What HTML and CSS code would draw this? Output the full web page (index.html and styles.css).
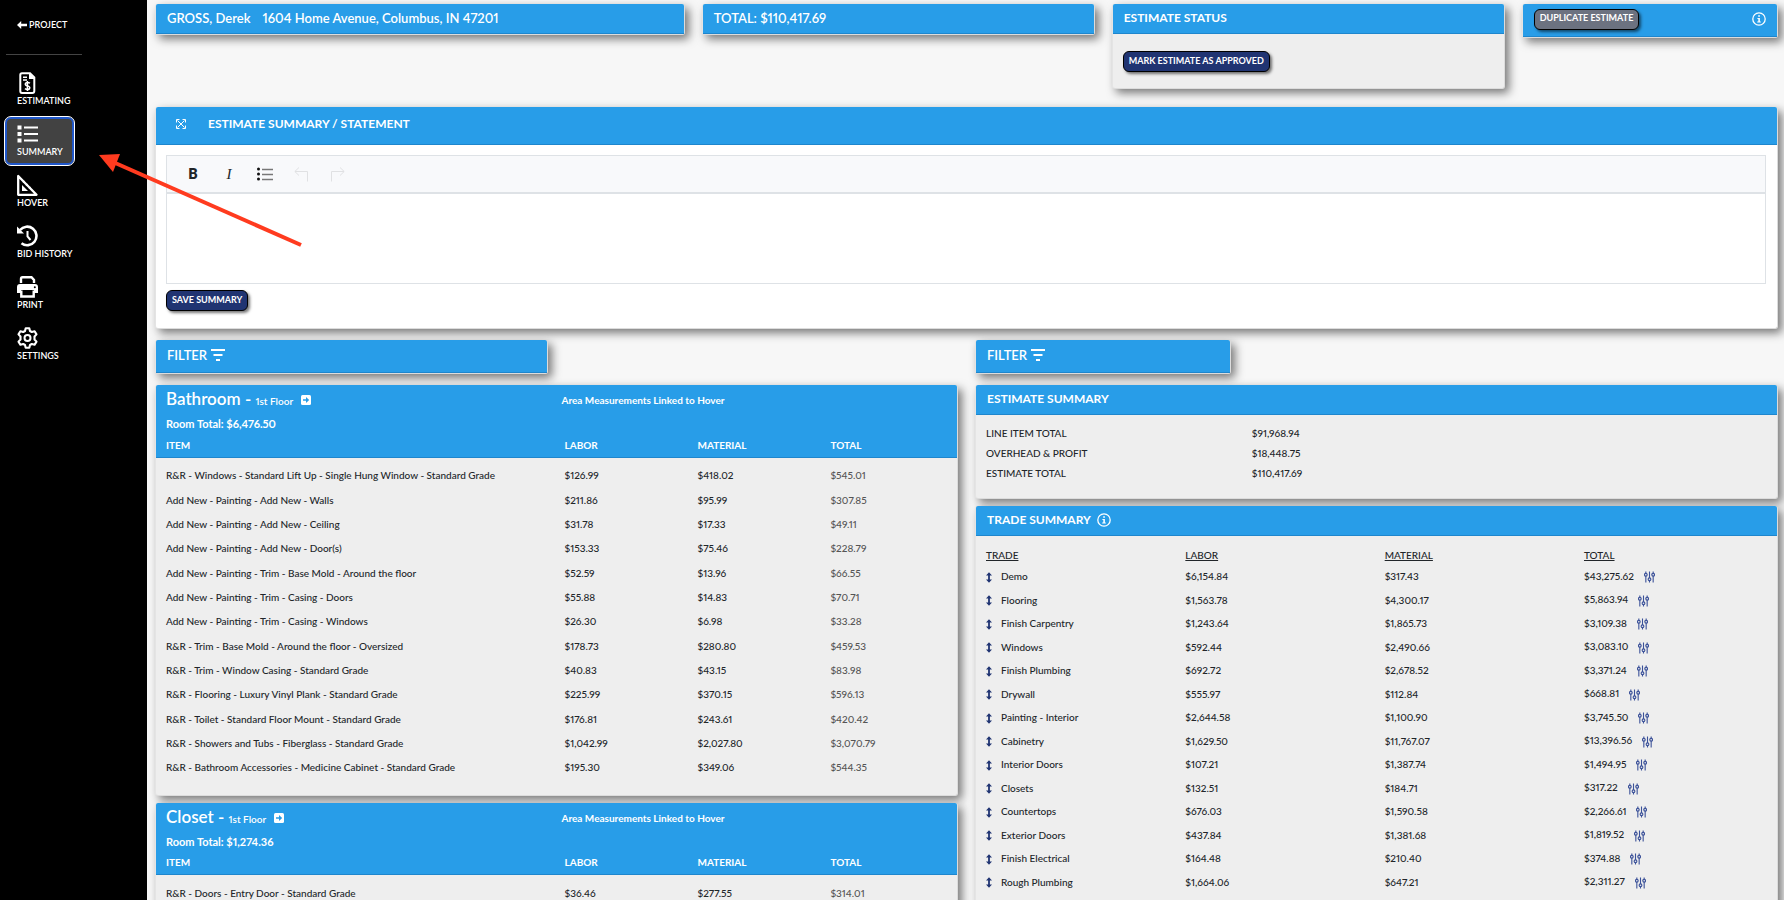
FILE: index.html
```
<!DOCTYPE html>
<html lang="en">
<head>
<meta charset="utf-8">
<title>Estimate Summary</title>
<link rel="stylesheet" href="styles.css">
</head>
<body>
<svg class="defs" aria-hidden="true">
  <symbol id="updown" viewBox="0 0 8 14"><path d="M4 0L8 4.200H5.200V9.800H8L4 14L0 9.800H2.800V4.200H0Z" fill="currentColor"/></symbol>
  <symbol id="sliders" viewBox="0 0 12 12"><g fill="none" stroke="currentColor" stroke-width="1.200"><path d="M2 0V2M2 5V12M6 0V7M6 10V12M10 0V2M10 5V12"/><circle cx="2" cy="3.500" r="1.500"/><circle cx="6" cy="8.500" r="1.500"/><circle cx="10" cy="3.500" r="1.500"/></g></symbol>
  <symbol id="info" viewBox="0 0 14 14"><circle cx="7" cy="7" r="6.200" fill="none" stroke="currentColor" stroke-width="1.300"/><path d="M6.200 3.300h1.700v1.500H6.200zM5.400 6h2.500v3.500h.9v1H5.200v-1h1.100V7h-.9z" fill="currentColor"/></symbol>
  <symbol id="filter" viewBox="0 0 14 12"><path d="M0 0H14V2H0ZM2.500 5H11.500V7H2.500ZM5 10H9V12H5Z" fill="currentColor"/></symbol>
  <symbol id="goto" viewBox="0 0 10 10"><rect width="10" height="10" rx="1.500" fill="#fff"/><path d="M2 4.200H5V2L8.200 5L5 8V5.800H2Z" fill="#289de8"/></symbol>
</svg>
<div class="app">
  <nav class="sidebar">
    <a class="back" href="#"><svg width="10" height="8" viewBox="0 0 10 8"><path d="M4.200 0V2.700H10V5.300H4.200V8L0 4Z" fill="currentColor"/></svg>PROJECT</a>
    <hr>
    <a class="item" href="#"><svg viewBox="0 0 22 22"><path d="M5 1.200H13L17.300 5.500V19Q17.300 21 15.300 21H5Q3.300 21 3.300 19V3Q3.300 1.200 5 1.200Z" fill="none" stroke="currentColor" stroke-width="2"/><path d="M12 1L18 7H12ZM6 4.500H10V6H6ZM6 7.200H10V8.700H6Z" fill="currentColor"/><path d="M13 11.200Q10.500 9.800 8.800 11Q7.600 12.600 9.300 13.500L11.700 14.300Q13.500 15.300 12.300 17Q10.300 18.200 7.900 16.700M10.400 9V19" fill="none" stroke="currentColor" stroke-width="1.500"/></svg>ESTIMATING</a>
    <a class="item active" href="#"><svg viewBox="0 0 22 22"><path d="M0.500 2.500h4v4h-4zM0.500 9h4v4h-4zM0.500 15.500h4v4h-4zM7 3.500H21V5.500H7ZM7 10H21V12H7ZM7 16.500H21V18.500H7Z" fill="currentColor"/></svg>SUMMARY</a>
    <a class="item" href="#"><svg viewBox="0 0 22 22"><path d="M1.200 2V20.800H19.500Z" fill="none" stroke="currentColor" stroke-width="2.300" stroke-linejoin="round"/><path d="M5 11V17H11Z" fill="currentColor"/><path d="M6 8.500L7.500 7M9 11.500L10.500 10M12 14.500L13.500 13" stroke="currentColor" stroke-width="1.400"/></svg>HOVER</a>
    <a class="item" href="#"><svg viewBox="0 0 22 22"><path d="M3 5A9.300 9.300 0 1 1 4.500 18.300" fill="none" stroke="currentColor" stroke-width="2.600"/><path d="M0 1.500V8.500H7Z" fill="currentColor"/><path d="M10.500 6V11.500L13.500 15" fill="none" stroke="currentColor" stroke-width="2"/></svg>BID HISTORY</a>
    <a class="item" href="#"><svg viewBox="0 0 22 22"><path d="M4 7V3Q4 1.300 5.500 1.300H14.500L17 4V7" fill="none" stroke="currentColor" stroke-width="2.400"/><path d="M3 8H18Q21 8 21 11V17H17V14H4V17H0V11Q0 8 3 8Z" fill="currentColor"/><path d="M4.300 14.500V20.500H16.700V14.500" fill="none" stroke="currentColor" stroke-width="2.400"/><circle cx="17.800" cy="11.300" r="1" fill="#000"/></svg>PRINT</a>
    <a class="item" href="#"><svg viewBox="0 0 22 22"><path d="M8.700 1.200H12.300L13 4L14.800 5L17.600 4.200L19.500 7.400L17.500 9.500V12.500L19.500 14.600L17.600 17.800L14.800 17L13 18L12.300 20.800H8.700L8 18L6.200 17L3.400 17.800L1.500 14.600L3.500 12.500V9.500L1.500 7.400L3.400 4.200L6.200 5L8 4Z" fill="none" stroke="currentColor" stroke-width="2.100" stroke-linejoin="round"/><circle cx="10.500" cy="11" r="3" fill="none" stroke="currentColor" stroke-width="2"/></svg>SETTINGS</a>
  </nav>
  <main>
    <section class="grid top">
      <div class="card s4"><h2 class="head"><span>GROSS, Derek</span><span>1604 Home Avenue, Columbus, IN 47201</span></h2></div>
      <div class="card s3"><h2 class="head">TOTAL: $110,417.69</h2></div>
      <div class="card s3"><h2 class="head caps">ESTIMATE STATUS</h2><div class="status"><button class="btn" type="button">MARK ESTIMATE AS APPROVED</button></div></div>
      <div class="card s2"><div class="head tall spread"><button class="btn gray" type="button">DUPLICATE ESTIMATE</button><svg class="info" role="img" aria-label="Info"><use href="#info"/></svg></div></div>
    </section>
    <section class="card statement">
      <h2 class="head caps statement-head"><svg width="10" height="10" viewBox="0 0 10 10"><path d="M1.500 1.500L8.500 8.500M8.500 1.500L1.500 8.500M.5 3.500V.5H3.500M6.500 .5H9.500V3.500M9.500 6.500V9.500H6.500M3.500 9.500H.5V6.500" fill="none" stroke="currentColor"/></svg>ESTIMATE SUMMARY / STATEMENT</h2>
      <div class="statement-body">
        <div class="toolbar">
          <button type="button" class="bold">B</button>
          <button type="button" class="italic">I</button>
          <button type="button" aria-label="Bulleted list"><svg width="16" height="14" viewBox="0 0 16 14"><path d="M5 2.500H16M5 7.500H16M5 12.500H16" stroke="#777" stroke-width="1.500"/><g fill="#111"><circle cx="1.500" cy="2" r="1.500"/><circle cx="1.500" cy="7" r="1.500"/><circle cx="1.500" cy="12" r="1.500"/></g></svg></button>
          <button type="button" aria-label="Undo" disabled><svg width="15" height="15" viewBox="0 0 15 15"><path d="M5 .5L.8 4.500L5 8.500M1 4.500H13.500V14.500" fill="none" stroke="#e0e1e3"/></svg></button>
          <button type="button" aria-label="Redo" disabled><svg width="15" height="15" viewBox="0 0 15 15"><path d="M10 .5L14.200 4.500L10 8.500M14 4.500H1.500V14.500" fill="none" stroke="#e0e1e3"/></svg></button>
        </div>
        <textarea aria-label="Estimate summary"></textarea>
        <button class="btn" type="button">SAVE SUMMARY</button>
      </div>
    </section>
    <section class="grid columns">
      <div class="column">
        <div class="card half"><h2 class="head tall">FILTER <svg class="filter"><use href="#filter"/></svg></h2></div>
        <article class="card room">
          <header><h3>Bathroom - <small>1st Floor</small> <a href="#" aria-label="Open room"><svg><use href="#goto"/></svg></a></h3><p class="link">Area Measurements Linked to Hover</p><p class="room-total">Room Total: $6,476.50</p></header>
          <table>
            <thead><tr><th>ITEM</th><th>LABOR</th><th>MATERIAL</th><th>TOTAL</th></tr></thead>
            <tbody>
              <tr><td>R&amp;R - Windows - Standard Lift Up - Single Hung Window - Standard Grade</td><td>$126.99</td><td>$418.02</td><td>$545.01</td></tr>
              <tr><td>Add New - Painting - Add New - Walls</td><td>$211.86</td><td>$95.99</td><td>$307.85</td></tr>
              <tr><td>Add New - Painting - Add New - Ceiling</td><td>$31.78</td><td>$17.33</td><td>$49.11</td></tr>
              <tr><td>Add New - Painting - Add New - Door(s)</td><td>$153.33</td><td>$75.46</td><td>$228.79</td></tr>
              <tr><td>Add New - Painting - Trim - Base Mold - Around the floor</td><td>$52.59</td><td>$13.96</td><td>$66.55</td></tr>
              <tr><td>Add New - Painting - Trim - Casing - Doors</td><td>$55.88</td><td>$14.83</td><td>$70.71</td></tr>
              <tr><td>Add New - Painting - Trim - Casing - Windows</td><td>$26.30</td><td>$6.98</td><td>$33.28</td></tr>
              <tr><td>R&amp;R - Trim - Base Mold - Around the floor - Oversized</td><td>$178.73</td><td>$280.80</td><td>$459.53</td></tr>
              <tr><td>R&amp;R - Trim - Window Casing - Standard Grade</td><td>$40.83</td><td>$43.15</td><td>$83.98</td></tr>
              <tr><td>R&amp;R - Flooring - Luxury Vinyl Plank - Standard Grade</td><td>$225.99</td><td>$370.15</td><td>$596.13</td></tr>
              <tr><td>R&amp;R - Toilet - Standard Floor Mount - Standard Grade</td><td>$176.81</td><td>$243.61</td><td>$420.42</td></tr>
              <tr><td>R&amp;R - Showers and Tubs - Fiberglass - Standard Grade</td><td>$1,042.99</td><td>$2,027.80</td><td>$3,070.79</td></tr>
              <tr><td>R&amp;R - Bathroom Accessories - Medicine Cabinet - Standard Grade</td><td>$195.30</td><td>$349.06</td><td>$544.35</td></tr>
            </tbody>
          </table>
        </article>
        <article class="card room">
          <header><h3>Closet - <small>1st Floor</small> <a href="#" aria-label="Open room"><svg><use href="#goto"/></svg></a></h3><p class="link">Area Measurements Linked to Hover</p><p class="room-total">Room Total: $1,274.36</p></header>
          <table>
            <thead><tr><th>ITEM</th><th>LABOR</th><th>MATERIAL</th><th>TOTAL</th></tr></thead>
            <tbody><tr><td>R&amp;R - Doors - Entry Door - Standard Grade</td><td>$36.46</td><td>$277.55</td><td>$314.01</td></tr></tbody>
          </table>
        </article>
      </div>
      <div class="column">
        <div class="card third"><h2 class="head tall">FILTER <svg class="filter"><use href="#filter"/></svg></h2></div>
        <div class="card"><h2 class="head caps">ESTIMATE SUMMARY</h2>
          <table class="sums"><tbody>
            <tr><th>LINE ITEM TOTAL</th><td>$91,968.94</td></tr>
            <tr><th>OVERHEAD &amp; PROFIT</th><td>$18,448.75</td></tr>
            <tr><th>ESTIMATE TOTAL</th><td>$110,417.69</td></tr>
          </tbody></table>
        </div>
        <div class="card"><h2 class="head caps">TRADE SUMMARY <svg class="info"><use href="#info"/></svg></h2>
          <table class="trades">
            <thead><tr><th>TRADE</th><th>LABOR</th><th>MATERIAL</th><th>TOTAL</th></tr></thead>
            <tbody>
              <tr><td><svg class="ud"><use href="#updown"/></svg>Demo</td><td>$6,154.84</td><td>$317.43</td><td>$43,275.62<svg class="sl"><use href="#sliders"/></svg></td></tr>
              <tr><td><svg class="ud"><use href="#updown"/></svg>Flooring</td><td>$1,563.78</td><td>$4,300.17</td><td>$5,863.94<svg class="sl"><use href="#sliders"/></svg></td></tr>
              <tr><td><svg class="ud"><use href="#updown"/></svg>Finish Carpentry</td><td>$1,243.64</td><td>$1,865.73</td><td>$3,109.38<svg class="sl"><use href="#sliders"/></svg></td></tr>
              <tr><td><svg class="ud"><use href="#updown"/></svg>Windows</td><td>$592.44</td><td>$2,490.66</td><td>$3,083.10<svg class="sl"><use href="#sliders"/></svg></td></tr>
              <tr><td><svg class="ud"><use href="#updown"/></svg>Finish Plumbing</td><td>$692.72</td><td>$2,678.52</td><td>$3,371.24<svg class="sl"><use href="#sliders"/></svg></td></tr>
              <tr><td><svg class="ud"><use href="#updown"/></svg>Drywall</td><td>$555.97</td><td>$112.84</td><td>$668.81<svg class="sl"><use href="#sliders"/></svg></td></tr>
              <tr><td><svg class="ud"><use href="#updown"/></svg>Painting - Interior</td><td>$2,644.58</td><td>$1,100.90</td><td>$3,745.50<svg class="sl"><use href="#sliders"/></svg></td></tr>
              <tr><td><svg class="ud"><use href="#updown"/></svg>Cabinetry</td><td>$1,629.50</td><td>$11,767.07</td><td>$13,396.56<svg class="sl"><use href="#sliders"/></svg></td></tr>
              <tr><td><svg class="ud"><use href="#updown"/></svg>Interior Doors</td><td>$107.21</td><td>$1,387.74</td><td>$1,494.95<svg class="sl"><use href="#sliders"/></svg></td></tr>
              <tr><td><svg class="ud"><use href="#updown"/></svg>Closets</td><td>$132.51</td><td>$184.71</td><td>$317.22<svg class="sl"><use href="#sliders"/></svg></td></tr>
              <tr><td><svg class="ud"><use href="#updown"/></svg>Countertops</td><td>$676.03</td><td>$1,590.58</td><td>$2,266.61<svg class="sl"><use href="#sliders"/></svg></td></tr>
              <tr><td><svg class="ud"><use href="#updown"/></svg>Exterior Doors</td><td>$437.84</td><td>$1,381.68</td><td>$1,819.52<svg class="sl"><use href="#sliders"/></svg></td></tr>
              <tr><td><svg class="ud"><use href="#updown"/></svg>Finish Electrical</td><td>$164.48</td><td>$210.40</td><td>$374.88<svg class="sl"><use href="#sliders"/></svg></td></tr>
              <tr><td><svg class="ud"><use href="#updown"/></svg>Rough Plumbing</td><td>$1,664.06</td><td>$647.21</td><td>$2,311.27<svg class="sl"><use href="#sliders"/></svg></td></tr>
            </tbody>
          </table>
        </div>
      </div>
    </section>
  </main>
  <svg class="pointer" viewBox="0 0 204 92" aria-hidden="true"><path d="M14 7L202 90" stroke="#ff3b1f" stroke-width="4"/><path d="M0 0L21 -1L14 17Z" fill="#ff3b1f"/></svg>
</div>
</body>
</html>
```
FILE: styles.css
```
* { box-sizing: border-box; }
body { margin: 0; background: #f7f7f7; color: #212529; font: 500 10px/14px Lato, "Liberation Sans", sans-serif; font-variant-numeric: proportional-nums; }
h2, h3, p { margin: 0; }
button { font: inherit; color: inherit; }
.defs { display: none; }
.app { position: relative; display: flex; height: 100vh; overflow: hidden; }

.sidebar { flex: 0 0 147px; background: #000; padding: 18px 0 0 4px; display: flex; flex-direction: column; align-items: flex-start; gap: 1px; color: #fff; font-size: 9px; font-weight: 600; }
.sidebar a { color: #fff; text-decoration: none; }
.back { display: flex; align-items: center; gap: 2px; padding-left: 13px; }
.sidebar hr { width: 76px; height: 1px; border: 0; background: #444; margin: 21px 0 9px 2px; }
.item { display: flex; flex-direction: column; align-items: flex-start; height: 50px; padding: 7px 12px 7px 13px; border-radius: 7px; }
.item svg { width: 22px; height: 22px; }
.item.active { background: #424242; border: 1px solid #fff; box-shadow: inset 0 0 0 2px #1f56c9; padding: 6px 11px 6px 12px; }

main { flex: 1; min-width: 0; padding: 4px 6px 0 8px; }
.grid { display: grid; grid-template-columns: repeat(12, 1fr); column-gap: 17px; align-items: start; }
.s4 { grid-column: span 4; }
.s3 { grid-column: span 3; }
.s2 { grid-column: span 2; }
.card { background: #eee; border: 1px solid #dcdcdc; border-top: 0; border-left-color: #e4e4e4; border-radius: 3px; box-shadow: 4px 4px 10px #777; }
.head { min-height: 30px; padding: 0 11px 2px; display: flex; align-items: center; gap: 6px; background: #289de8; border-bottom: 1px solid #1e86cd; border-radius: 2px 2px 0 0; color: #fff; font-size: 13px; line-height: 18px; font-weight: 600; }
.head.caps { font-size: 12px; font-weight: 700; }
.head span + span { margin-left: 6px; }
.head.tall { min-height: 33px; gap: 4px; }
.head.spread { justify-content: space-between; }
.info { width: 14px; height: 14px; }
.filter { width: 14px; height: 12px; }
.top { min-height: 103px; }
.status { padding: 17px 10px 16px; }
.btn { display: block; height: 21px; padding: 0 5px 2px; background: #203472; border: 1px solid #000; border-radius: 6px; color: #fff; font-size: 9px; font-weight: 700; line-height: 14px; box-shadow: 2px 2px 3px #0008; }
.btn.gray { background: #6c7280; }

.statement { background: #fff; margin-bottom: 11px; }
.statement-head { min-height: 38px; padding: 0 20px 4px; gap: 22px; }
.statement-body { padding: 10px 11px 17px 10px; }
.toolbar { display: flex; align-items: center; height: 38px; padding-left: 8px; border: 1px solid #dee2e6; background: #f8f9fb; }
.toolbar button { width: 36px; height: 30px; padding: 0; border: 0; background: none; display: flex; align-items: center; justify-content: center; color: #212529; }
.toolbar .bold { font-size: 14px; font-weight: 800; }
.toolbar .italic { font: italic 15px "Liberation Serif", serif; }
.statement textarea { display: block; width: 100%; height: 91px; margin-bottom: 6px; border: 1px solid #dee2e6; border-top-color: #dee2e6; resize: none; background: #fff; }

.columns .column { grid-column: span 6; display: grid; grid-template-columns: repeat(6, 1fr); column-gap: 17px; row-gap: 7px; }
.column .card { grid-column: span 6; }
.column .half { grid-column: span 3; margin-bottom: 4px; }
.column .third { grid-column: span 2; margin-bottom: 4px; }

table { width: 100%; table-layout: fixed; border-collapse: collapse; }
th, td { padding: 0; text-align: left; font-weight: 500; vertical-align: middle; white-space: nowrap; }
.room header { display: grid; grid-template-columns: 50% 1fr; grid-template-rows: 30px 18px; align-items: center; padding-left: 10px; background: #289de8; color: #fff; border-radius: 2px 2px 0 0; font-weight: 700; }
.room h3 { font-size: 17px; line-height: 24px; font-weight: 600; }
.room small { font-size: 10px; }
.room h3 a { margin-left: 4px; }
.room h3 svg { width: 10px; height: 10px; }
.link { font-size: 10px; }
.room-total { font-size: 11px; }
.room thead { background: #289de8; color: #fff; border-bottom: 1px solid #1e86cd; }
.room th { height: 24px; font-weight: 700; width: 16.6%; }
.room th:first-child { width: 51%; }
.room th:last-child { width: auto; }
.room th:first-child, .room td:first-child { padding-left: 10px; }
.room td:last-child { color: #555; }
.room tbody tr { height: 24px; }
.room tbody tr:nth-child(3n+1) { height: 25px; }
.room tbody::before, .room tbody::after { content: ""; display: block; height: 5px; }
.room tbody::after { height: 15px; }

.sums, .trades { margin-left: 10px; width: calc(100% - 10px); }
.sums { margin-top: 8px; margin-bottom: 15px; }
.sums tr { height: 20px; }
.sums th { width: 33.6%; }
.trades { margin-top: 10px; margin-bottom: 40px; }
.trades th { width: 25.2%; height: 18px; text-decoration: underline; }
.trades th:last-child { width: auto; }
.trades tbody tr { height: 24px; }
.trades tbody tr:nth-child(even) { height: 23px; }
.ud { width: 6px; height: 11px; margin-right: 9px; vertical-align: middle; color: #203472; }
.sl { width: 11px; height: 12px; margin-left: 10px; vertical-align: middle; color: #3b5199; }

.pointer { position: absolute; left: 99px; top: 155px; width: 204px; height: 92px; overflow: visible; }
```
